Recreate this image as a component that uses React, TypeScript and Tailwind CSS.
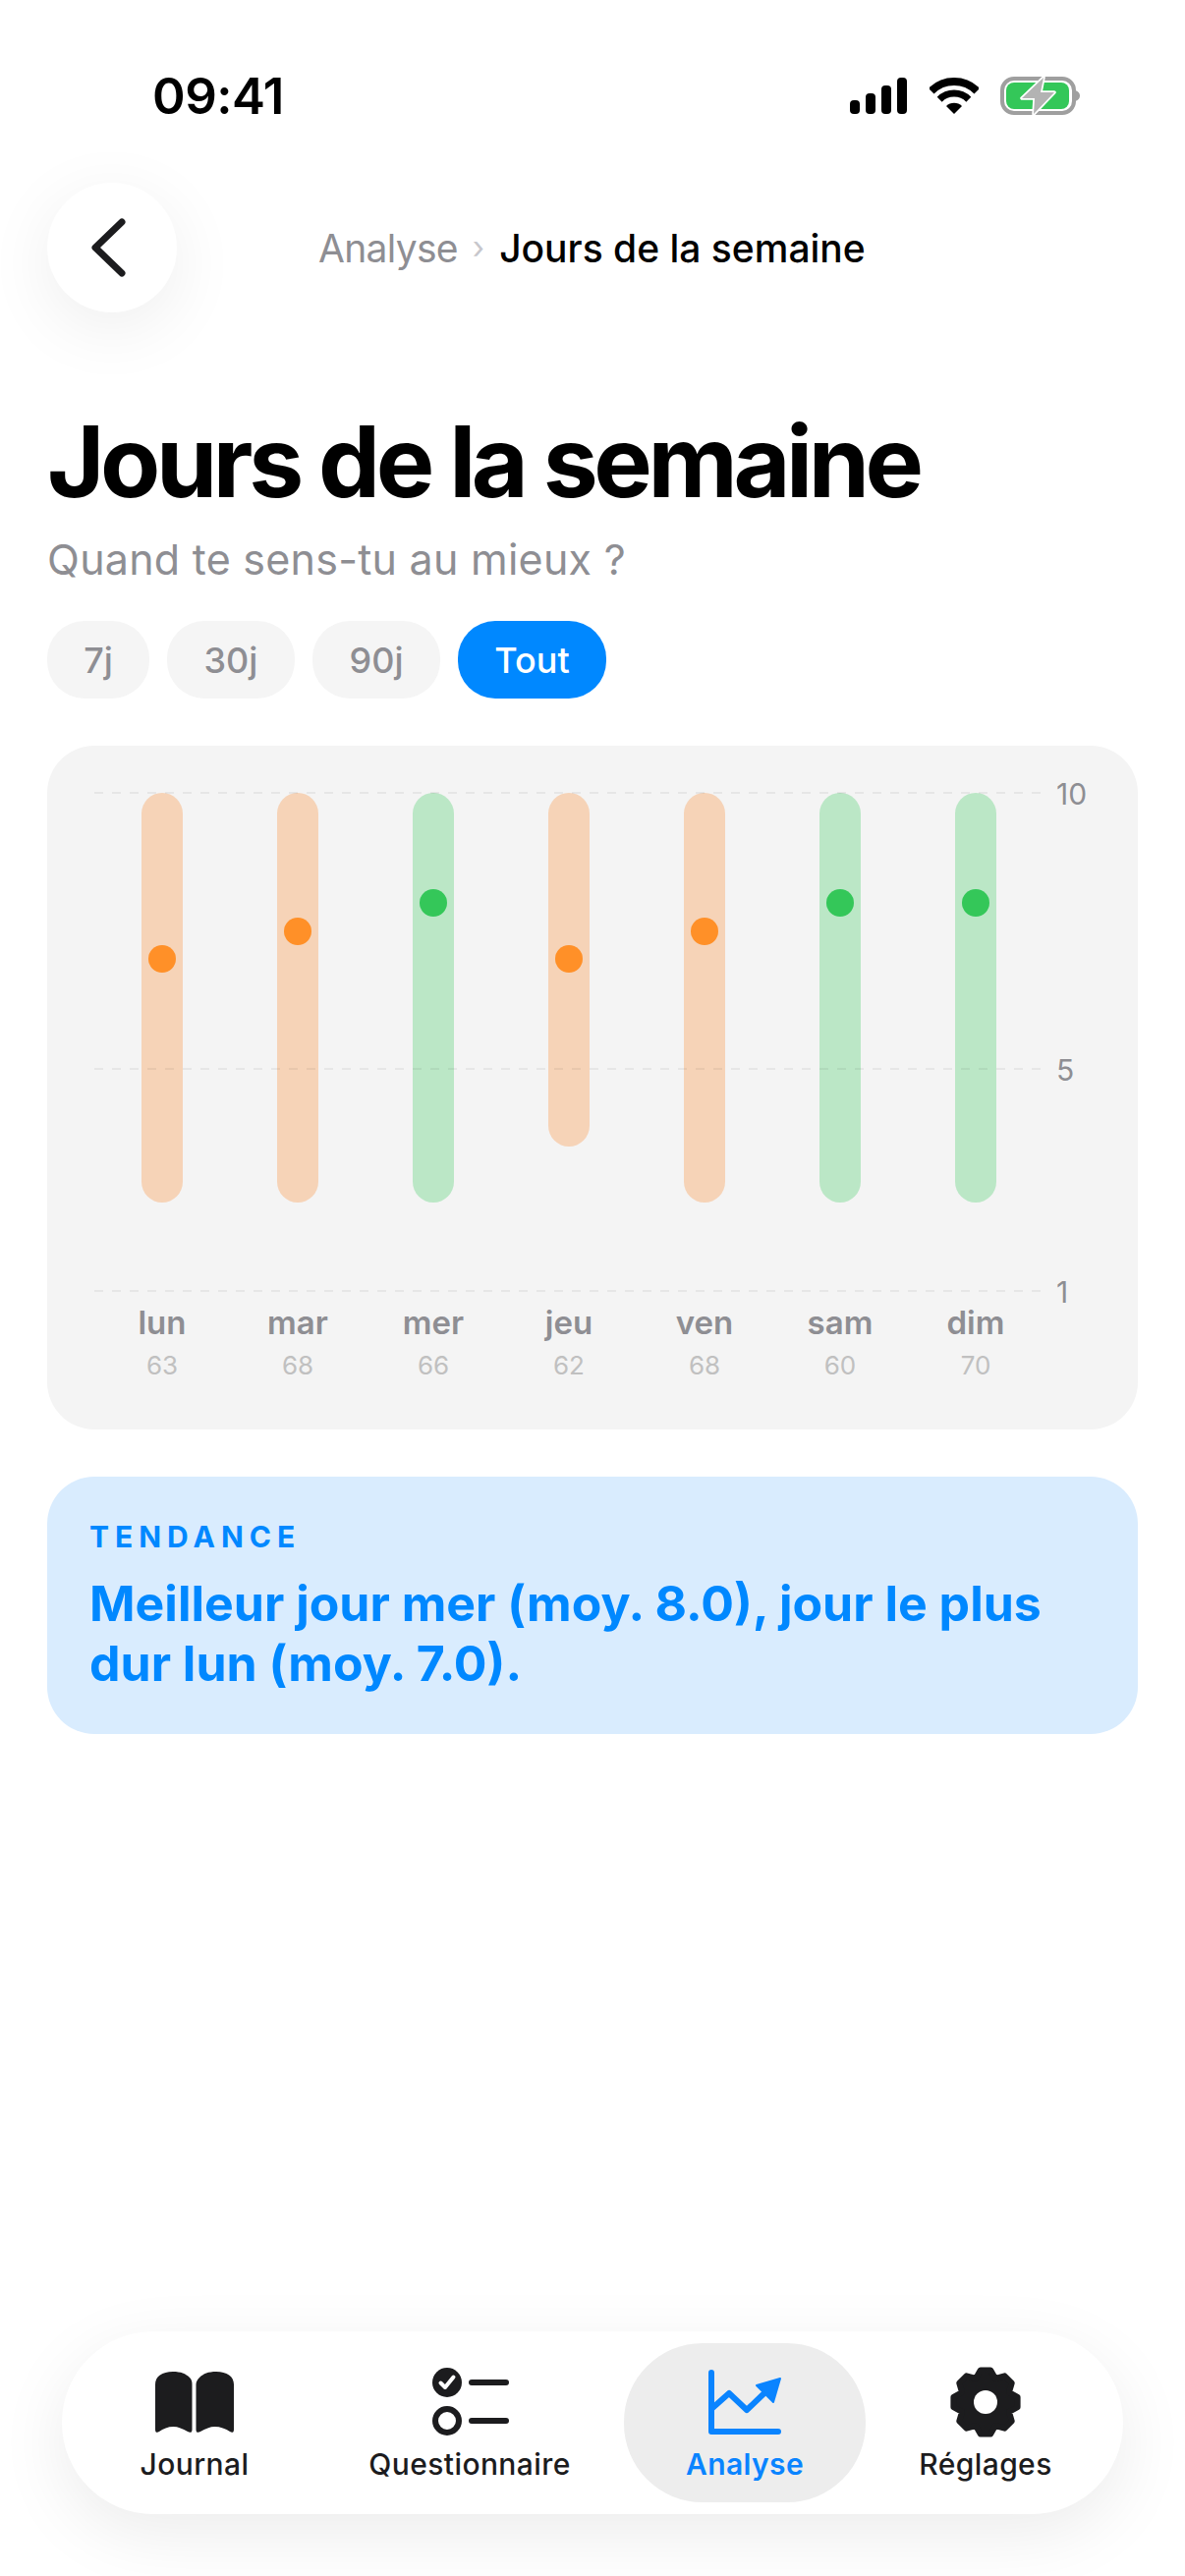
const days = [
  { label: "lun", count: 63, height: 417, dot: 169, good: false },
  { label: "mar", count: 68, height: 417, dot: 141, good: false },
  { label: "mer", count: 66, height: 417, dot: 112, good: true },
  { label: "jeu", count: 62, height: 360, dot: 169, good: false },
  { label: "ven", count: 68, height: 417, dot: 141, good: false },
  { label: "sam", count: 60, height: 417, dot: 112, good: true },
  { label: "dim", count: 70, height: 417, dot: 112, good: true },
];

const axis = [
  { value: "10", top: 0 },
  { value: "5", top: 281 },
  { value: "1", top: 507 },
];

const ranges = [
  { label: "7j", width: "w-[104px]" },
  { label: "30j", width: "w-[130px]" },
  { label: "90j", width: "w-[130px]" },
];

function gearPath(cx: number, cy: number) {
  const teeth = 8;
  const pts: string[] = [];
  for (let i = 0; i < teeth; i++) {
    const a = (i / teeth) * Math.PI * 2 - Math.PI / 2;
    const step = (Math.PI * 2) / teeth;
    const rows: [number, number][] = [
      [26, -0.5 * step],
      [33, -0.2 * step],
      [33, 0.2 * step],
    ];
    for (const [r, d] of rows) {
      pts.push(`${(cx + r * Math.cos(a + d)).toFixed(2)} ${(cy + r * Math.sin(a + d)).toFixed(2)}`);
    }
  }
  return `M${pts.join("L")}Z`;
}

function StatusIcons() {
  return (
    <div className="flex items-center">
      <svg width="58" height="37" viewBox="0 0 58 37" fill="#000">
        <rect x="0" y="23" width="10" height="14" rx="4" />
        <rect x="16" y="16" width="10" height="21" rx="4" />
        <rect x="32" y="8" width="10" height="29" rx="4" />
        <rect x="48" y="0" width="10" height="37" rx="4" />
      </svg>
      <svg className="ml-[23px]" width="50" height="37" viewBox="0 0 50 37" fill="none">
        <path d="M1.7 13.7A33 33 0 0 1 48.3 13.7" stroke="#000" strokeWidth="8" />
        <path d="M10.2 22.2A21 21 0 0 1 39.8 22.2" stroke="#000" strokeWidth="7" />
        <path d="M25 37L17 29A11.3 11.3 0 0 1 33 29Z" fill="#000" />
      </svg>
      <svg className="ml-[22px]" width="81" height="39" viewBox="0 0 81 39" fill="none">
        <rect x="2" y="2" width="73" height="35" rx="12" stroke="#9f9f9f" strokeWidth="4" />
        <rect x="6" y="6" width="64" height="27" rx="8" fill="#34c759" />
        <path d="M76.5 14C79.5 15 81 17 81 19.5C81 22 79.5 24 76.5 25Z" fill="#9f9f9f" />
        <path
          d="M44 1L22 22H35L34 38L55 16H41Z"
          fill="#b3b3b3"
          stroke="#fff"
          strokeWidth="3.5"
          strokeLinejoin="round"
          paintOrder="stroke"
        />
      </svg>
    </div>
  );
}

function BookIcon() {
  return (
    <svg width="80" height="64" viewBox="0 0 80 64" fill="#1c1c1e">
      <path d="M0 14C0 6 7 1 18 1C26 1 31 3 35 7C37 9 37.500 11 37.500 14V60C37.500 63 35.500 63.500 33 62C28 59 23 57 18.500 57C13 57 8 59 4 62C2 63.500 0 63 0 60Z" />
      <path d="M80 14C80 6 73 1 62 1C54 1 49 3 45 7C43 9 41.500 11 41.500 14V60C41.500 63 43.500 63.500 46 62C51 59 56 57 60.500 57C66 57 72 59 76 62C78 63.500 80 63 80 60Z" />
    </svg>
  );
}

function ChecklistIcon() {
  return (
    <svg width="78" height="70" viewBox="0 0 78 70" fill="none" className="ml-[1px]">
      <circle cx="15" cy="15" r="15" fill="#1c1c1e" />
      <path d="M8.500 15.500L13 20L21.500 9.500" stroke="#fff" strokeWidth="4" strokeLinecap="round" strokeLinejoin="round" />
      <circle cx="15" cy="54" r="12" stroke="#1c1c1e" strokeWidth="6" />
      <path d="M40 15H75M40 54H75" stroke="#1c1c1e" strokeWidth="6" strokeLinecap="round" />
    </svg>
  );
}

function ChartIcon() {
  return (
    <svg width="76" height="66" viewBox="0 0 76 66" fill="none" className="ml-[2px]">
      <path d="M3 3V63H71" stroke="#0a84ff" strokeWidth="6" strokeLinecap="round" strokeLinejoin="round" />
      <path d="M3 40L21 24L39 41L62 19" stroke="#0a84ff" strokeWidth="6" strokeLinecap="round" strokeLinejoin="round" />
      <path d="M49 16L73 9L66 33Z" fill="#0a84ff" stroke="#0a84ff" strokeWidth="2" strokeLinejoin="round" />
    </svg>
  );
}

function GearIcon() {
  return (
    <svg width="74" height="74" viewBox="0 0 74 74">
      <path d={gearPath(37, 37)} fill="#1c1c1e" stroke="#1c1c1e" strokeWidth="6" strokeLinejoin="round" />
      <circle cx="37" cy="37" r="12" fill="#fff" />
    </svg>
  );
}

const tabs = [
  { label: "Journal", width: "w-[246px]", icon: <BookIcon />, active: false },
  { label: "Questionnaire", width: "w-[314px]", icon: <ChecklistIcon />, active: false },
  { label: "Analyse", width: "w-[246px]", icon: <ChartIcon />, active: true },
  { label: "Réglages", width: "w-[244px]", icon: <GearIcon />, active: false },
];

export default function App() {
  return (
    <div className="w-[1206px] h-[2622px] bg-white flex flex-col overflow-hidden font-['Inter',sans-serif]">
      <div className="flex items-center justify-between h-[50px] mt-[72px] pl-[155px] pr-[107px]">
        <span className="text-[51px] leading-none font-semibold text-black tracking-[-0.5px]">09:41</span>
        <StatusIcons />
      </div>

      <div className="flex items-center mt-[64px] ml-[48px]">
        <button
          type="button"
          className="w-[132px] h-[132px] rounded-full bg-white flex items-center justify-center shadow-[0_16px_70px_rgba(0,0,0,0.07)]"
        >
          <svg width="40" height="60" viewBox="0 0 40 60" fill="none" className="-ml-[6px]">
            <path d="M33 4L6 30L33 56" stroke="#1c1c1e" strokeWidth="7" strokeLinecap="round" strokeLinejoin="round" />
          </svg>
        </button>
        <div className="flex items-center ml-[144px] text-[39px] leading-none">
          <span className="text-[#8e8e93] tracking-[-0.7px]">Analyse</span>
          <span className="text-[#c7c7cc] mx-[15px] text-[32px]">›</span>
          <span className="text-black font-medium">Jours de la semaine</span>
        </div>
      </div>

      <h1 className="mx-[48px] mt-[92px] text-[100px] leading-[120px] font-bold text-black tracking-[-4.400px]">
        Jours de la semaine
      </h1>
      <p className="mx-[48px] mt-[13px] text-[43px] leading-[52px] text-[#8e8e93] tracking-[0.25px]">Quand te sens-tu au mieux ?</p>

      <div className="flex gap-[18px] mx-[48px] mt-[37px]">
        {ranges.map((c) => (
          <span
            key={c.label}
            className={`${c.width} h-[79px] rounded-[38px] bg-[#f5f5f5] flex items-center justify-center text-[36px] font-medium text-[#8e8e93]`}
          >
            {c.label}
          </span>
        ))}
        <span className="w-[151px] h-[79px] rounded-[38px] bg-[#0088ff] flex items-center justify-center text-[36px] font-medium text-white">
          Tout
        </span>
      </div>

      <div className="mx-[48px] mt-[48px] h-[696px] rounded-[48px] bg-[#f4f4f4] pt-[48px] pl-[48px]">
        <div className="relative h-[507px]">
          <div className="grid grid-cols-7 w-[966px]">
            {days.map((d) => (
              <div key={d.label} className="flex justify-center">
                <div
                  className={`relative w-[42px] rounded-[21px] ${d.good ? "bg-[#bbe7c6]" : "bg-[#f6d3b7]"}`}
                  style={{ height: d.height }}
                >
                  <div
                    className={`absolute left-[7px] w-[28px] h-[28px] rounded-full ${d.good ? "bg-[#34c759]" : "bg-[#ff9028]"}`}
                    style={{ top: d.dot - 14 }}
                  />
                </div>
              </div>
            ))}
          </div>
          {axis.map((a) => (
            <div key={a.value} className="absolute left-0 flex items-center h-[2px]" style={{ top: a.top - 1 }}>
              <div className="w-[964px] h-[2px] bg-[repeating-linear-gradient(90deg,rgba(0,0,0,0.06)_0_9px,transparent_9px_18px)]" />
              <span className="ml-[15px] mt-[2px] text-[30px] leading-none text-[#8e8e93]">{a.value}</span>
            </div>
          ))}
        </div>
        <div className="grid grid-cols-7 w-[966px] mt-[12px]">
          {days.map((d) => (
            <div key={d.label} className="flex flex-col items-center">
              <span className="text-[33px] leading-[40px] font-semibold text-[#8e8e93]">{d.label}</span>
              <span className="mt-[8px] text-[26px] leading-[32px] text-[#c0c0c0]">{d.count}</span>
            </div>
          ))}
        </div>
      </div>

      <div className="mx-[48px] mt-[48px] h-[262px] rounded-[48px] bg-[#d9ecfe] pt-[43px] px-[43px] text-[#0088ff]">
        <div className="text-[30px] leading-[36px] font-bold tracking-[6px]">TENDANCE</div>
        <p className="mt-[20px] text-[50px] leading-[61px] font-bold">
          Meilleur jour mer (moy. 8.0), jour le plus dur lun (moy. 7.0).
        </p>
      </div>

      <div className="mt-auto mb-[63px] mx-[63px] h-[186px] rounded-[93px] bg-white flex items-center pl-[12px] shadow-[0_20px_70px_rgba(0,0,0,0.08)]">
        {tabs.map((t) => (
          <div
            key={t.label}
            className={`${t.width} h-[162px] rounded-[80px] flex flex-col items-center ${t.active ? "bg-[#ededed]" : ""}`}
          >
            <div className="h-[66px] mt-[27px] flex items-center justify-center">{t.icon}</div>
            <span className={`mt-[12px] text-[30px] leading-[36px] font-medium tracking-[0.4px] ${t.active ? "text-[#0a84ff] font-semibold" : "text-[#1c1c1e]"}`}>
              {t.label}
            </span>
          </div>
        ))}
      </div>
    </div>
  );
}
